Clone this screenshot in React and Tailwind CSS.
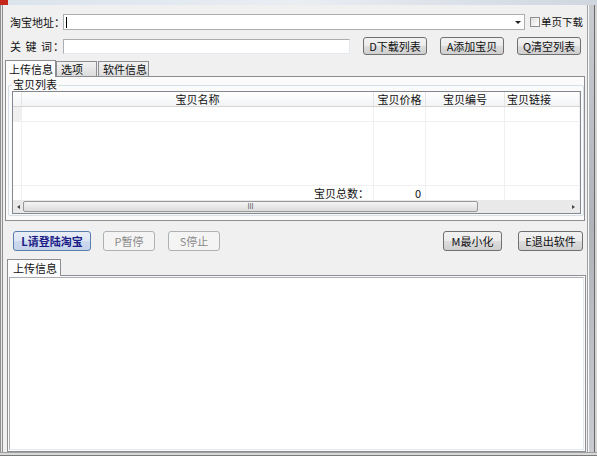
const font = { fontFamily: '"Noto Sans CJK SC", "Noto Sans", sans-serif' };

function Btn({ children, className = "", disabled, primary }) {
  let look = "border-[#707070] bg-[linear-gradient(#f2f2f2_0%,#ebebeb_50%,#dddddd_50%,#cfcfcf_100%)] text-[#111]";
  if (disabled) look = "border-[#adb2b5] bg-[#f4f4f4] text-[#8a8a8a]";
  if (primary) look = "border-[#5a7fa8] bg-[linear-gradient(#e8eef8_0%,#dde6f4_50%,#cdd9ee_50%,#c4d2ea_100%)] text-[#1b1b86] font-bold";
  return (
    <div className={`flex items-center justify-center rounded-[3px] border text-[11px] leading-none ${look} ${className}`}>
      {children}
    </div>
  );
}

function Tab({ label, active, className = "" }) {
  return active ? (
    <div className={`relative z-10 -mb-px flex h-[17px] items-center border border-b-0 border-[#8c8e94] bg-[#fcfcfc] px-[3px] text-[11px] leading-none ${className}`}>
      {label}
    </div>
  ) : (
    <div className={`mt-[2px] flex h-[15px] items-center border border-b-0 border-[#8c8e94] bg-[linear-gradient(#f2f2f2,#dcdcdc)] px-[4px] text-[11px] leading-none ${className}`}>
      {label}
    </div>
  );
}

const cols = [
  { w: "w-[9px]", label: "" },
  { w: "w-[352px]", label: "宝贝名称", align: "justify-center" },
  { w: "w-[52px]", label: "宝贝价格", align: "justify-center" },
  { w: "w-[79px]", label: "宝贝编号", align: "justify-center" },
  { w: "w-[75px]", label: "宝贝链接", align: "justify-start pl-[2px]" },
];

export default function App() {
  return (
    <div className="w-[597px] h-[456px] bg-[#f0f0f0] overflow-hidden whitespace-nowrap text-[11px] text-[#111]" style={font}>
      <div className="flex h-[5px] bg-[linear-gradient(90deg,#dbe3ec,#e9eef3,#cfd6de)]">
        <div className="w-[8px] bg-[#c4261c]" />
      </div>
      <div className="flex h-[447px]">
        <div className="w-[3px] border-l border-r border-[#8f8f8f] bg-[#e6e6e6]" />
        <div className="w-[584px] flex flex-col">
          {/* address row */}
          <div className="mt-[9px] flex h-[16px] items-center pl-[7px]">
            <div className="w-[53px] leading-none">淘宝地址：</div>
            <div className="relative flex h-[16px] w-[462px] items-center border border-[#abadb3] bg-white">
              <div className="ml-[2px] h-[11px] w-px bg-black" />
              <div className="absolute right-[3px] top-[6px] h-0 w-0 border-x-[3px] border-t-[3px] border-x-transparent border-t-[#222]" />
            </div>
            <div className="ml-[5px] h-[10px] w-[10px] border border-[#8f8f8f] bg-[linear-gradient(135deg,#e0e0e0,#fff)]" />
            <div className="ml-px text-[10.5px] leading-none">单页下载</div>
          </div>
          {/* keyword row */}
          <div className="mt-[7px] flex h-[18px] items-center pl-[7px]">
            <div className="w-[53px] leading-none tracking-[1px]">关 键 词：</div>
            <div className="h-[15px] w-[287px] border border-[#abadb3] border-r-[#e3e9ef] border-b-[#e3e9ef] bg-white" />
            <Btn className="ml-[13px] h-[18px] w-[64px]">D下载列表</Btn>
            <Btn className="ml-[13px] h-[18px] w-[64px]">A添加宝贝</Btn>
            <Btn className="ml-[13px] h-[18px] w-[64px]">Q清空列表</Btn>
          </div>
          {/* tabs */}
          <div className="mt-[4px] flex items-end pl-[2px]">
            <Tab label="上传信息" active className="w-[51px]" />
            <Tab label="选项" className="w-[41px]" />
            <Tab label="软件信息" className="ml-px w-[51px]" />
          </div>
          <div className="ml-[2px] h-[145px] w-[580px] border border-[#8c8e94] bg-[#fbfbfb]">
            <div className="relative mt-[8px] ml-[2px] h-[131px] w-[576px] rounded-[2px] border border-[#d5dfe5]">
              <div className="absolute -top-[7px] left-[3px] bg-[#fbfbfb] px-px leading-none">宝贝列表</div>
              <div className="mt-[5px] ml-[3px] w-[569px] border border-[#828790] bg-white">
                <div className="flex h-[15px] border-b border-[#d5d5d5] bg-[linear-gradient(#ffffff,#f3f4f6)]">
                  {cols.map((c, i) => (
                    <div key={i} className={`${c.w} flex items-center ${c.align || ""} border-r border-[#e5e5e5] leading-none`}>
                      {c.label}
                    </div>
                  ))}
                </div>
                <div className="flex h-[15px] border-b border-[#f0f0f0]">
                  {cols.map((c, i) => (
                    <div key={i} className={`${c.w} border-r border-[#f0f0f0] ${i === 0 ? "bg-[#f0f0f0]" : ""}`} />
                  ))}
                </div>
                <div className="flex h-[63px]">
                  {cols.map((c, i) => (
                    <div key={i} className={`${c.w} border-r border-[#f0f0f0]`} />
                  ))}
                </div>
                <div className="flex h-[15px] border-t border-[#f0f0f0]">
                  {cols.map((c, i) => (
                    <div key={i} className={`${c.w} flex items-center justify-end pr-[4px] border-r border-[#f0f0f0] leading-none`}>
                      {i === 1 ? "宝贝总数：" : i === 2 ? "0" : ""}
                    </div>
                  ))}
                </div>
                <div className="flex h-[13px] items-center bg-[#e9e9e9]">
                  <div className="flex w-[10px] items-center justify-center">
                    <div className="h-0 w-0 border-y-[2px] border-r-[3px] border-y-transparent border-r-[#444]" />
                  </div>
                  <div className="flex h-[11px] w-[455px] items-center justify-center rounded-[2px] border border-[#979797] bg-[linear-gradient(#f5f5f5,#dcdcdc)] text-[7px] leading-none text-[#555]">
                    III
                  </div>
                  <div className="flex-1" />
                  <div className="flex w-[14px] items-center justify-center">
                    <div className="h-0 w-0 border-y-[2px] border-l-[3px] border-y-transparent border-l-[#444]" />
                  </div>
                </div>
              </div>
            </div>
          </div>
          {/* action buttons */}
          <div className="mt-[10px] flex h-[20px] items-center">
            <Btn primary className="ml-[10px] h-[20px] w-[78px]">L请登陆淘宝</Btn>
            <Btn disabled className="ml-[12px] h-[20px] w-[52px]">P暂停</Btn>
            <Btn disabled className="ml-[13px] h-[20px] w-[52px]">S停止</Btn>
            <div className="flex-1" />
            <Btn className="h-[20px] w-[59px]">M最小化</Btn>
            <Btn className="ml-[16px] mr-[4px] h-[20px] w-[65px]">E退出软件</Btn>
          </div>
          <div className="mt-[8px] flex pl-[4px]">
            <Tab label="上传信息" active className="w-[54px] px-[5px]" />
          </div>
          <div className="ml-[4px] h-[177px] w-[579px] border border-[#8c8e94] bg-[#fbfbfb] p-px">
            <div className="h-full w-full border border-[#abadb3] border-r-[#e3e9ef] border-b-[#e3e9ef] bg-white" />
          </div>
        </div>
        <div className="flex w-[10px]">
          <div className="w-[2px] border-l border-[#a0a0a0] bg-[#f8f8f8]" />
          <div className="w-[5px] bg-[linear-gradient(#c8ccd0,#b0b4b8,#c8ccd0)]" />
          <div className="w-[3px] border-l border-[#6a6a6a] bg-[#d4d4d4]" />
        </div>
      </div>
      <div className="h-[4px] border-t border-[#a0a0a0] bg-[#d8d8d8] border-b border-b-[#7a7a7a]" />
    </div>
  );
}
